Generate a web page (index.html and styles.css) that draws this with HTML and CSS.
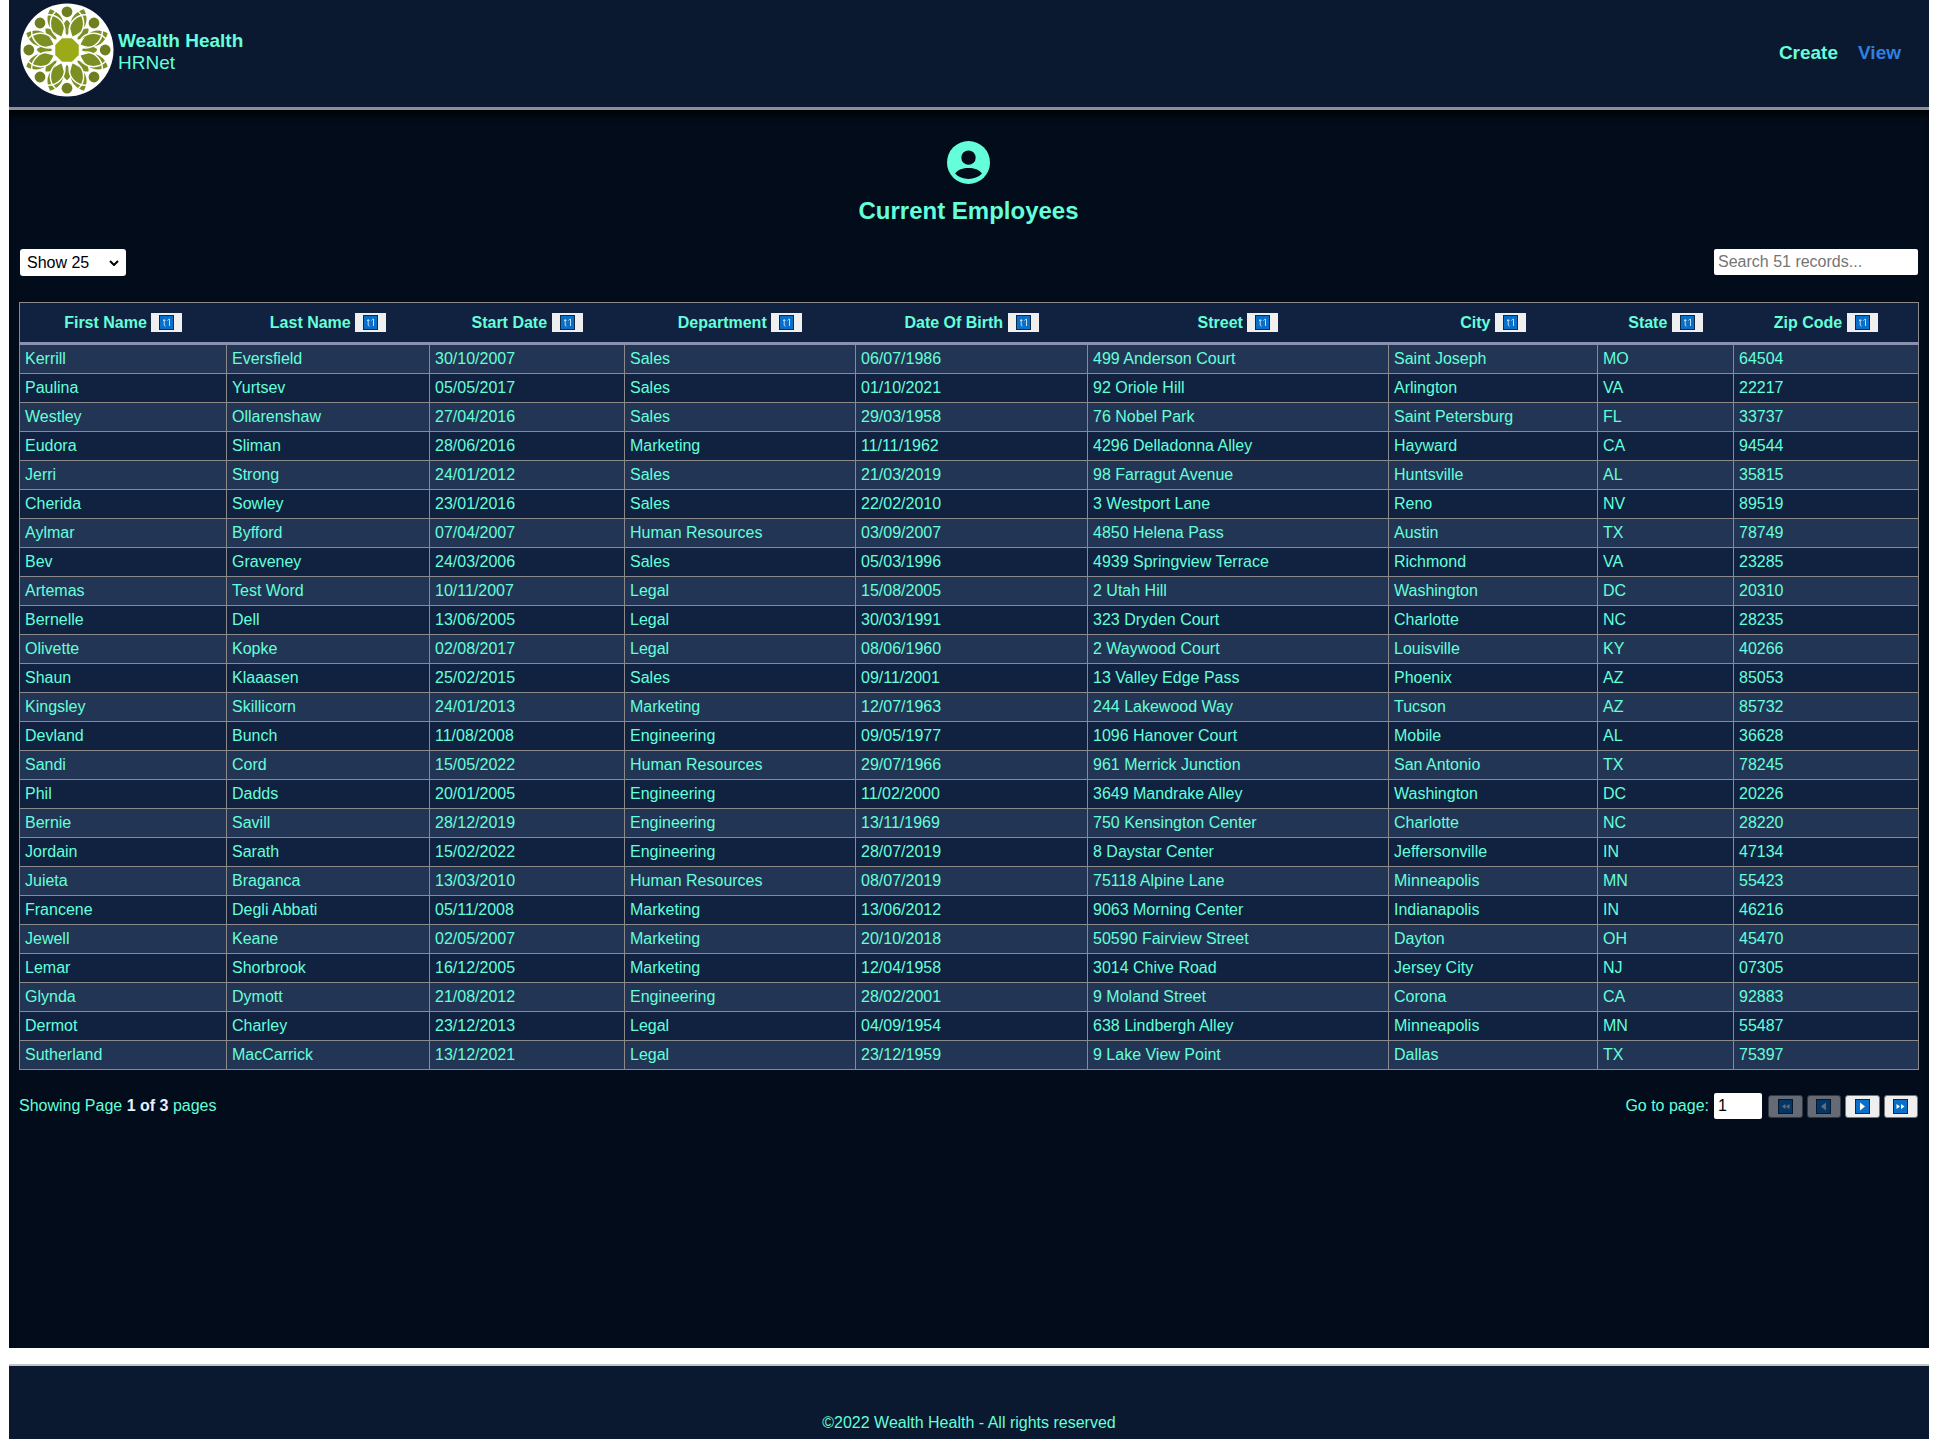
FILE: index.html
```html
<!DOCTYPE html>
<html lang="en">
  <head>
    <meta charset="UTF-8" />
    <title>Wealth Health - Current Employees</title>
    <link rel="stylesheet" href="styles.css">
  </head>
  <body>
    <svg class="sprites" width="0" height="0">
      <symbol id="ico-sort" viewBox="0 0 15 15">
        <rect x="0.5" y="0.5" width="14" height="14" fill="#0a6fc9" stroke="#0b2a4a"/>
        <path d="M4 5.500H6.500M5.200 4V10Q5.200 11 6.500 11M8.500 5.500Q9.500 4 10.500 4V11" fill="none" stroke="#b9dcf8" stroke-width="1"/>
      </symbol>
      <symbol id="ico-first" viewBox="0 0 15 15">
        <rect x="0.5" y="0.5" width="14" height="14" fill="#0a6fc9" stroke="#0b2a4a"/>
        <path d="M7.500 5V10L4 7.500ZM11.500 5V10L8 7.500Z" fill="#e8f3fc"/>
      </symbol>
      <symbol id="ico-prev" viewBox="0 0 15 15">
        <rect x="0.5" y="0.5" width="14" height="14" fill="#0a6fc9" stroke="#0b2a4a"/>
        <path d="M10 3.500V11.500L5 7.500Z" fill="#e8f3fc"/>
      </symbol>
      <symbol id="ico-next" viewBox="0 0 15 15">
        <rect x="0.5" y="0.5" width="14" height="14" fill="#0a6fc9" stroke="#0b2a4a"/>
        <path d="M5 3.500V11.500L10 7.500Z" fill="#fff"/>
      </symbol>
      <symbol id="ico-last" viewBox="0 0 15 15">
        <rect x="0.5" y="0.5" width="14" height="14" fill="#0a6fc9" stroke="#0b2a4a"/>
        <path d="M3.500 5V10L7 7.500ZM8 5V10L11.500 7.500Z" fill="#fff"/>
      </symbol>
      <!-- one eighth of the logo rosette -->
      <path id="leaf" d="M0 -45C10 -37 10 -25 0 -15C-10 -25 -10 -37 0 -45Z" fill="#7c8f22"/>
      <path id="leaflet" d="M0 -31C5 -27 5 -21 0 -15C-5 -21 -5 -27 0 -31Z" fill="#7c8f22"/>
      <circle id="arc" cx="0" cy="-27" r="17" fill="none" stroke="#fff" stroke-width="1.500"/>
      <circle id="dot" cx="0" cy="-39" r="5.500" fill="#6f7f1f"/>
    </svg>

    <!-- Header -->
    <header class="site-header">
      <a class="brand" href="#">
        <svg class="logo" viewBox="-48 -48 96 96">
          <circle r="47.500" fill="#fff"/>
          <g transform="rotate(22.500)">
            <use href="#leaf"/>
            <use href="#leaf" transform="rotate(45)"/>
            <use href="#leaf" transform="rotate(90)"/>
            <use href="#leaf" transform="rotate(135)"/>
            <use href="#leaf" transform="rotate(180)"/>
            <use href="#leaf" transform="rotate(225)"/>
            <use href="#leaf" transform="rotate(270)"/>
            <use href="#leaf" transform="rotate(315)"/>
          </g>
          <use href="#leaflet"/>
          <use href="#leaflet" transform="rotate(45)"/>
          <use href="#leaflet" transform="rotate(90)"/>
          <use href="#leaflet" transform="rotate(135)"/>
          <use href="#leaflet" transform="rotate(180)"/>
          <use href="#leaflet" transform="rotate(225)"/>
          <use href="#leaflet" transform="rotate(270)"/>
          <use href="#leaflet" transform="rotate(315)"/>
          <use href="#arc"/>
          <use href="#arc" transform="rotate(45)"/>
          <use href="#arc" transform="rotate(90)"/>
          <use href="#arc" transform="rotate(135)"/>
          <use href="#arc" transform="rotate(180)"/>
          <use href="#arc" transform="rotate(225)"/>
          <use href="#arc" transform="rotate(270)"/>
          <use href="#arc" transform="rotate(315)"/>
          <circle r="14" fill="#fff"/>
          <circle cy="-39" r="7" fill="#fff"/>
          <circle cy="39" r="7" fill="#fff"/>
          <circle cx="39" r="7" fill="#fff"/>
          <circle cx="-39" r="7" fill="#fff"/>
          <use href="#dot"/>
          <use href="#dot" transform="rotate(45)"/>
          <use href="#dot" transform="rotate(90)"/>
          <use href="#dot" transform="rotate(135)"/>
          <use href="#dot" transform="rotate(180)"/>
          <use href="#dot" transform="rotate(225)"/>
          <use href="#dot" transform="rotate(270)"/>
          <use href="#dot" transform="rotate(315)"/>
          <path d="M-5 -12H5L12 -5V5L5 12H-5L-12 5V-5Z" fill="#9bab17"/>
        </svg>
        <span class="brand-text"><strong>Wealth Health</strong><span>HRNet</span></span>
      </a>
      <nav class="site-nav">
        <a href="#">Create</a>
        <a class="active" href="#">View</a>
      </nav>
    </header>

    <!-- Main content -->
    <main class="content">
      <div class="title-block">
        <svg class="user-icon" viewBox="0 0 24 24">
          <circle cx="12" cy="12" r="12" fill="#64ffda"/>
          <circle cx="12" cy="9.300" r="4" fill="#020c1b"/>
          <path d="M4.500 18.200C6 15.800 9 15 12 15C15 15 18 15.800 19.500 18.200C17.500 20.300 15 21.200 12 21.200C9 21.200 6.500 20.300 4.500 18.200Z" fill="#020c1b"/>
        </svg>
        <h1>Current Employees</h1>
      </div>

      <div class="toolbar">
        <select class="page-size">
          <option>Show 25</option>
        </select>
        <input class="search" type="text" placeholder="Search 51 records...">
      </div>

      <table class="employees">
        <colgroup>
          <col class="c-first"><col class="c-last"><col class="c-start"><col class="c-dept"><col class="c-dob"><col class="c-street"><col class="c-city"><col class="c-state"><col class="c-zip">
        </colgroup>
        <thead>
          <tr>
            <th>First Name <button class="sort"><svg><use href="#ico-sort"/></svg></button></th>
            <th>Last Name <button class="sort"><svg><use href="#ico-sort"/></svg></button></th>
            <th>Start Date <button class="sort"><svg><use href="#ico-sort"/></svg></button></th>
            <th>Department <button class="sort"><svg><use href="#ico-sort"/></svg></button></th>
            <th>Date Of Birth <button class="sort"><svg><use href="#ico-sort"/></svg></button></th>
            <th>Street <button class="sort"><svg><use href="#ico-sort"/></svg></button></th>
            <th>City <button class="sort"><svg><use href="#ico-sort"/></svg></button></th>
            <th>State <button class="sort"><svg><use href="#ico-sort"/></svg></button></th>
            <th>Zip Code <button class="sort"><svg><use href="#ico-sort"/></svg></button></th>
          </tr>
        </thead>
        <tbody>
          <tr><td>Kerrill</td><td>Eversfield</td><td>30/10/2007</td><td>Sales</td><td>06/07/1986</td><td>499 Anderson Court</td><td>Saint Joseph</td><td>MO</td><td>64504</td></tr>
          <tr><td>Paulina</td><td>Yurtsev</td><td>05/05/2017</td><td>Sales</td><td>01/10/2021</td><td>92 Oriole Hill</td><td>Arlington</td><td>VA</td><td>22217</td></tr>
          <tr><td>Westley</td><td>Ollarenshaw</td><td>27/04/2016</td><td>Sales</td><td>29/03/1958</td><td>76 Nobel Park</td><td>Saint Petersburg</td><td>FL</td><td>33737</td></tr>
          <tr><td>Eudora</td><td>Sliman</td><td>28/06/2016</td><td>Marketing</td><td>11/11/1962</td><td>4296 Delladonna Alley</td><td>Hayward</td><td>CA</td><td>94544</td></tr>
          <tr><td>Jerri</td><td>Strong</td><td>24/01/2012</td><td>Sales</td><td>21/03/2019</td><td>98 Farragut Avenue</td><td>Huntsville</td><td>AL</td><td>35815</td></tr>
          <tr><td>Cherida</td><td>Sowley</td><td>23/01/2016</td><td>Sales</td><td>22/02/2010</td><td>3 Westport Lane</td><td>Reno</td><td>NV</td><td>89519</td></tr>
          <tr><td>Aylmar</td><td>Byfford</td><td>07/04/2007</td><td>Human Resources</td><td>03/09/2007</td><td>4850 Helena Pass</td><td>Austin</td><td>TX</td><td>78749</td></tr>
          <tr><td>Bev</td><td>Graveney</td><td>24/03/2006</td><td>Sales</td><td>05/03/1996</td><td>4939 Springview Terrace</td><td>Richmond</td><td>VA</td><td>23285</td></tr>
          <tr><td>Artemas</td><td>Test Word</td><td>10/11/2007</td><td>Legal</td><td>15/08/2005</td><td>2 Utah Hill</td><td>Washington</td><td>DC</td><td>20310</td></tr>
          <tr><td>Bernelle</td><td>Dell</td><td>13/06/2005</td><td>Legal</td><td>30/03/1991</td><td>323 Dryden Court</td><td>Charlotte</td><td>NC</td><td>28235</td></tr>
          <tr><td>Olivette</td><td>Kopke</td><td>02/08/2017</td><td>Legal</td><td>08/06/1960</td><td>2 Waywood Court</td><td>Louisville</td><td>KY</td><td>40266</td></tr>
          <tr><td>Shaun</td><td>Klaaasen</td><td>25/02/2015</td><td>Sales</td><td>09/11/2001</td><td>13 Valley Edge Pass</td><td>Phoenix</td><td>AZ</td><td>85053</td></tr>
          <tr><td>Kingsley</td><td>Skillicorn</td><td>24/01/2013</td><td>Marketing</td><td>12/07/1963</td><td>244 Lakewood Way</td><td>Tucson</td><td>AZ</td><td>85732</td></tr>
          <tr><td>Devland</td><td>Bunch</td><td>11/08/2008</td><td>Engineering</td><td>09/05/1977</td><td>1096 Hanover Court</td><td>Mobile</td><td>AL</td><td>36628</td></tr>
          <tr><td>Sandi</td><td>Cord</td><td>15/05/2022</td><td>Human Resources</td><td>29/07/1966</td><td>961 Merrick Junction</td><td>San Antonio</td><td>TX</td><td>78245</td></tr>
          <tr><td>Phil</td><td>Dadds</td><td>20/01/2005</td><td>Engineering</td><td>11/02/2000</td><td>3649 Mandrake Alley</td><td>Washington</td><td>DC</td><td>20226</td></tr>
          <tr><td>Bernie</td><td>Savill</td><td>28/12/2019</td><td>Engineering</td><td>13/11/1969</td><td>750 Kensington Center</td><td>Charlotte</td><td>NC</td><td>28220</td></tr>
          <tr><td>Jordain</td><td>Sarath</td><td>15/02/2022</td><td>Engineering</td><td>28/07/2019</td><td>8 Daystar Center</td><td>Jeffersonville</td><td>IN</td><td>47134</td></tr>
          <tr><td>Juieta</td><td>Braganca</td><td>13/03/2010</td><td>Human Resources</td><td>08/07/2019</td><td>75118 Alpine Lane</td><td>Minneapolis</td><td>MN</td><td>55423</td></tr>
          <tr><td>Francene</td><td>Degli Abbati</td><td>05/11/2008</td><td>Marketing</td><td>13/06/2012</td><td>9063 Morning Center</td><td>Indianapolis</td><td>IN</td><td>46216</td></tr>
          <tr><td>Jewell</td><td>Keane</td><td>02/05/2007</td><td>Marketing</td><td>20/10/2018</td><td>50590 Fairview Street</td><td>Dayton</td><td>OH</td><td>45470</td></tr>
          <tr><td>Lemar</td><td>Shorbrook</td><td>16/12/2005</td><td>Marketing</td><td>12/04/1958</td><td>3014 Chive Road</td><td>Jersey City</td><td>NJ</td><td>07305</td></tr>
          <tr><td>Glynda</td><td>Dymott</td><td>21/08/2012</td><td>Engineering</td><td>28/02/2001</td><td>9 Moland Street</td><td>Corona</td><td>CA</td><td>92883</td></tr>
          <tr><td>Dermot</td><td>Charley</td><td>23/12/2013</td><td>Legal</td><td>04/09/1954</td><td>638 Lindbergh Alley</td><td>Minneapolis</td><td>MN</td><td>55487</td></tr>
          <tr><td>Sutherland</td><td>MacCarrick</td><td>13/12/2021</td><td>Legal</td><td>23/12/1959</td><td>9 Lake View Point</td><td>Dallas</td><td>TX</td><td>75397</td></tr>
        </tbody>
      </table>

      <div class="pager">
        <span class="page-info">Showing Page <strong>1 of 3</strong> pages</span>
        <div class="page-controls">
          <label for="pageInput">Go to page:</label>
          <input id="pageInput" class="page-input" type="number" value="1">
          <button class="page-btn" disabled><svg><use href="#ico-first"/></svg></button>
          <button class="page-btn" disabled><svg><use href="#ico-prev"/></svg></button>
          <button class="page-btn"><svg><use href="#ico-next"/></svg></button>
          <button class="page-btn"><svg><use href="#ico-last"/></svg></button>
        </div>
      </div>
    </main>

    <footer class="site-footer">
      <p>©2022 Wealth Health - All rights reserved</p>
    </footer>
  </body>
</html>
```

FILE: styles.css
```css
html { height: 100%; }

body {
  margin: 0 14px 0 9px;
  height: 1439px;
  overflow: hidden;
  background: #fff;
  color: #64ffda;
  font-family: "Liberation Sans", Arial, sans-serif;
  font-size: 16px;
}

.sprites { position: absolute; }

/* Header */
.site-header {
  height: 107px;
  display: flex;
  justify-content: space-between;
  align-items: center;
  padding: 0 28px 0 11px;
  background: #0a192f;
  border-bottom: 3px solid #8a8f98;
}

.brand {
  display: flex;
  align-items: center;
  gap: 4px;
  margin-top: -7px;
  text-decoration: none;
  color: #64ffda;
  font-size: 19px;
}

.logo {
  width: 94px;
  height: 94px;
}

.brand-text {
  display: flex;
  flex-direction: column;
  line-height: 22px;
  padding-top: 4px;
}

.site-nav {
  display: flex;
  gap: 20px;
  margin-top: -2px;
  font-size: 19px;
  font-weight: 700;
}

.site-nav a {
  color: #64ffda;
  text-decoration: none;
}

.site-nav a.active { color: #2f80e0; }

/* Main content */
.content {
  height: 1238px;
  padding: 0 11px 0 10px;
  background: #020c1b;
  box-shadow: inset 0 8px 10px -4px #000;
}

.title-block {
  padding-top: 31px;
  display: flex;
  flex-direction: column;
  align-items: center;
}

.user-icon {
  width: 43px;
  height: 43px;
}

h1 {
  margin: 13px 0 0;
  font-size: 24px;
  line-height: 28px;
  font-weight: 700;
}

.toolbar {
  display: flex;
  justify-content: space-between;
  align-items: flex-start;
  margin-top: 24px;
}

.page-size {
  appearance: none;
  width: 106px;
  height: 27px;
  margin-left: 1px;
  padding: 0 7px;
  border: 0;
  border-radius: 3px;
  background: #fff url("data:image/svg+xml,%3Csvg xmlns='http://www.w3.org/2000/svg' width='10' height='6'%3E%3Cpath d='M1 1l4 4 4-4' fill='none' stroke='%23000' stroke-width='2'/%3E%3C/svg%3E") no-repeat right 7px center;
  color: #000;
  font-family: inherit;
  font-size: 16px;
}

.search {
  width: 204px;
  height: 26px;
  box-sizing: border-box;
  padding: 0 4px;
  border: 0;
  border-radius: 2px;
  font-family: inherit;
  font-size: 16px;
}

/* Table */
.employees {
  width: 100%;
  margin-top: 26px;
  table-layout: fixed;
  border-collapse: collapse;
  border: 1px solid #8a8a8a;
}

.c-first { width: 207px; }
.c-last { width: 203px; }
.c-start { width: 195px; }
.c-dept { width: 231px; }
.c-dob { width: 232px; }
.c-street { width: 301px; }
.c-city { width: 209px; }
.c-state { width: 136px; }
.c-zip { width: 185px; }

.employees th {
  height: 39px;
  padding: 0;
  background: #112240;
  border-bottom: 3px solid #8892b0;
  font-size: 16px;
  white-space: nowrap;
}

.sort {
  width: 31px;
  height: 19px;
  margin-left: 0;
  padding: 0;
  border: 0;
  background: #efefef;
  vertical-align: -4px;
}

.sort svg {
  display: block;
  width: 15px;
  height: 15px;
  margin: 0 auto;
}

.employees td {
  height: 28px;
  padding: 0 4px 0 5px;
  border: 1px solid #8a8a8a;
  white-space: nowrap;
}

.employees tbody tr:nth-child(odd) { background: #233554; }
.employees tbody tr:nth-child(even) { background: #112240; }

/* Pager */
.pager {
  display: flex;
  justify-content: space-between;
  align-items: center;
  margin-top: 23px;
}

.page-info strong { color: #e6f1ff; }

.page-controls {
  display: flex;
  align-items: center;
}

.page-input {
  width: 48px;
  height: 26px;
  box-sizing: border-box;
  margin: 0 6px 0 5px;
  padding: 0 4px;
  border: 0;
  border-radius: 2px;
  font-family: inherit;
  font-size: 16px;
  -moz-appearance: textfield;
}

.page-input::-webkit-inner-spin-button { display: none; }

.page-btn {
  width: 34.5px;
  height: 23px;
  margin-left: 4px;
  padding: 0;
  border: 1px solid #767676;
  border-radius: 3px;
  background: #efefef;
}

.page-btn:first-of-type { margin-left: 0; }

.page-btn:disabled { opacity: 0.42; }

.page-btn svg {
  display: block;
  width: 15px;
  height: 15px;
  margin: 0 auto;
}

/* Footer */
.site-footer {
  margin-top: 16px;
  height: 73px;
  background: #0a192f;
  border-top: 2px solid #c4c4c4;
  text-align: center;
}

.site-footer p {
  margin: 0;
  padding-top: 48px;
  line-height: 18px;
}
```
